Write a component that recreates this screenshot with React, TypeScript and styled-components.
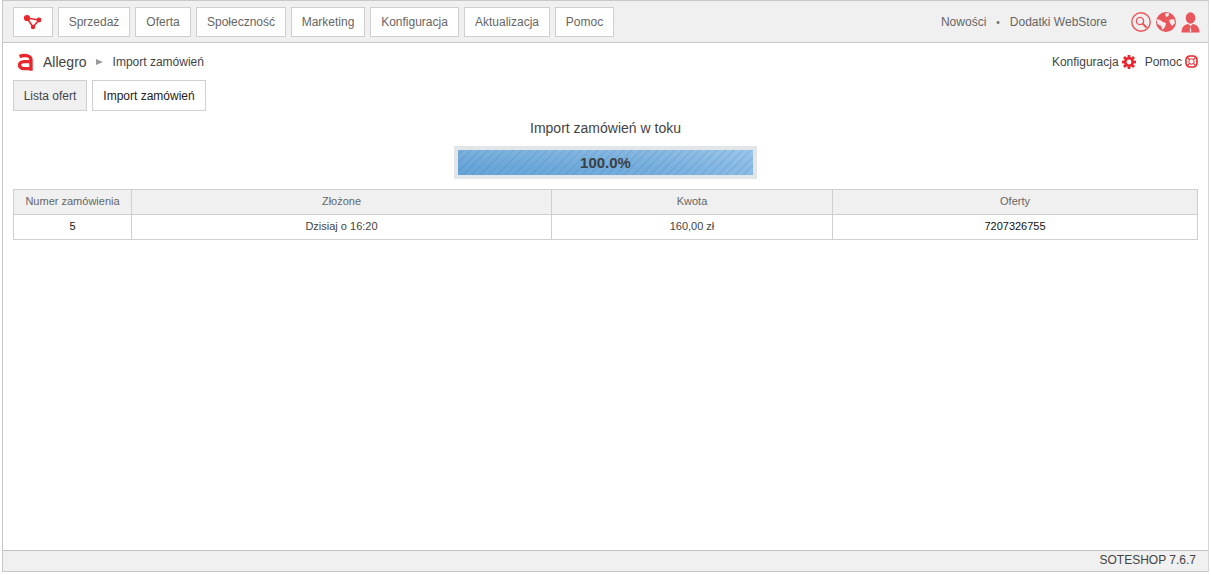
import styled, { createGlobalStyle } from "styled-components";

const GlobalStyle = createGlobalStyle`
  html, body {
    margin: 0;
    padding: 0;
    background: #fff;
  }
  body {
    font-family: "Liberation Sans", Arial, sans-serif;
    font-size: 12px;
    color: #444;
  }
`;

const Frame = styled.div`
  box-sizing: border-box;
  display: flex;
  flex-direction: column;
  width: 1207px;
  height: 572px;
  margin-left: 2px;
  border: 1px solid #c8c8c8;
  border-right-color: #d8d8d8;
`;

const TopBar = styled.header`
  box-sizing: border-box;
  display: flex;
  align-items: center;
  justify-content: space-between;
  height: 42px;
  padding: 1px 8px 0 10px;
  background: #f0f0f0;
  border-bottom: 1px solid #c4c4c4;
`;

const Nav = styled.nav`
  display: flex;
  gap: 5px;
`;

const NavButton = styled.a<{ $w: number }>`
  box-sizing: border-box;
  display: flex;
  align-items: center;
  justify-content: center;
  width: ${(p) => p.$w}px;
  height: 30px;
  background: #fff;
  border: 1px solid #cfcfcf;
  font-size: 12px;
  color: #666;
`;

const TopRight = styled.div`
  display: flex;
  align-items: center;
`;

const TopLink = styled.a`
  font-size: 12px;
  color: #666;
`;

const Dot = styled.span`
  margin: 0 10px;
  font-size: 10px;
  color: #666;
`;

const TopIcons = styled.div`
  display: flex;
  align-items: center;
  gap: 5px;
  margin-left: 24px;
`;

const Crumbs = styled.div`
  display: flex;
  align-items: center;
  justify-content: space-between;
  height: 37px;
  padding: 0 10px 0 15px;
`;

const CrumbLeft = styled.div`
  display: flex;
  align-items: center;
`;

const CrumbTitle = styled.span`
  margin-left: 10px;
  font-size: 14px;
  color: #444;
`;

const CrumbArrow = styled.span`
  width: 0;
  height: 0;
  margin: 0 10px 0 9px;
  border-left: 7px solid #999;
  border-top: 3.5px solid transparent;
  border-bottom: 3.5px solid transparent;
`;

const CrumbCurrent = styled.span`
  font-size: 12px;
  color: #444;
`;

const CrumbRight = styled.div`
  display: flex;
  align-items: center;
  font-size: 12px;
  color: #444;
`;

const HelpLink = styled.a<{ $gap?: number }>`
  display: flex;
  align-items: center;
  gap: 3px;
  margin-left: ${(p) => p.$gap ?? 0}px;
`;

const Tabs = styled.div`
  display: flex;
  gap: 5px;
  padding-left: 10px;
`;

const Tab = styled.a<{ $w: number; $active?: boolean }>`
  box-sizing: border-box;
  display: flex;
  align-items: center;
  justify-content: center;
  width: ${(p) => p.$w}px;
  height: 31px;
  border: 1px solid #cfcfcf;
  font-size: 12px;
  background: ${(p) => (p.$active ? "#fff" : "#f0f0f0")};
  color: ${(p) => (p.$active ? "#222" : "#444")};
`;

const Content = styled.main`
  flex: 1;
  padding: 0 10px;
`;

const ImportTitle = styled.h2`
  margin: 9px 0 0;
  font-size: 14px;
  font-weight: normal;
  line-height: 16px;
  text-align: center;
  color: #444;
`;

const ProgressOuter = styled.div`
  box-sizing: border-box;
  width: 303px;
  height: 33px;
  margin: 10px auto;
  padding: 4px;
  background: #e3e6e8;
`;

const ProgressBar = styled.div`
  display: flex;
  align-items: center;
  justify-content: center;
  height: 100%;
  font-size: 15px;
  font-weight: bold;
  color: #3a3f45;
  background:
    repeating-linear-gradient(
      -45deg,
      rgba(50, 100, 150, 0.1) 0 2px,
      rgba(50, 100, 150, 0) 2px 6px
    ),
    linear-gradient(to bottom, rgba(255, 255, 255, 0.14), rgba(255, 255, 255, 0) 70%),
    linear-gradient(100deg, #66a4d8 0%, #76aedd 65%, #8cbde7 100%);
`;

const Table = styled.table`
  width: 1184px;
  border-collapse: collapse;
  table-layout: fixed;
  font-size: 11px;
`;

const Col = styled.col<{ $w: number }>`
  width: ${(p) => p.$w}px;
`;

const Th = styled.th`
  height: 22px;
  padding: 0 0 2px;
  background: #f0f0f0;
  border: 1px solid #cfcfcf;
  font-weight: normal;
  color: #666;
`;

const Td = styled.td<{ $dark?: boolean }>`
  height: 22px;
  padding: 0 0 2px;
  border: 1px solid #cfcfcf;
  text-align: center;
  color: ${(p) => (p.$dark ? "#111" : "#444")};
`;

const Footer = styled.footer`
  box-sizing: border-box;
  height: 21px;
  padding-right: 12px;
  background: #f0f0f0;
  border-top: 1px solid #c0c0c0;
  font-size: 12px;
  line-height: 19px;
  text-align: right;
  color: #444;
`;

const RED = "#e8262d";
const SOFT = "#e9565c";

const LogoIcon = () => (
  <svg width="20" height="16" viewBox="0 0 20 16">
    <path d="M4 4 L16 6 L10 13 Z" fill="none" stroke={RED} strokeWidth="1.6" />
    <circle cx="4" cy="4" r="3.1" fill={RED} />
    <circle cx="16" cy="6" r="2.4" fill={RED} />
    <circle cx="10" cy="13" r="2.2" fill={RED} />
  </svg>
);

const AllegroIcon = () => (
  <svg width="15" height="18" viewBox="0 -1 15 18">
    <path
      d="M1.6 2.6 C4.5 1.2 13 0.4 13 6 V16.8 M13 7.6 H6 C0 7.6 0 14.6 6 14.6 H13"
      fill="none"
      stroke={RED}
      strokeWidth="3.4"
    />
  </svg>
);

const SearchIcon = () => (
  <svg width="20" height="20" viewBox="0 0 20 20">
    <circle cx="10" cy="10" r="9.2" fill="none" stroke={SOFT} strokeWidth="1.4" />
    <circle cx="9" cy="9" r="3.6" fill="none" stroke={SOFT} strokeWidth="1.4" />
    <path d="M11.8 11.8 L15 15" stroke={SOFT} strokeWidth="2" strokeLinecap="round" />
  </svg>
);

const GlobeIcon = () => (
  <svg width="20" height="20" viewBox="0 0 20 20">
    <circle cx="10" cy="10" r="10" fill={SOFT} />
    <path
      d="M0.5 7 L4 8 L7 10 L10 11 L9 15 L6.5 18 L5 14 L1.5 12 Z M9 1.5 L13 1 L12.5 4 L10 5 Z M13 8 L18 7 L19 11 L16 14 L14.5 12 Z"
      fill="#f7ecec"
    />
  </svg>
);

const UserIcon = () => (
  <svg width="19" height="21" viewBox="0 0 19 21">
    <ellipse cx="9.5" cy="6" rx="4.8" ry="5.8" fill={SOFT} />
    <path d="M0.5 20.5 C0.5 14.5 4 12.6 7 12 L9.5 14 L12 12 C15 12.6 18.5 14.5 18.5 20.5 Z" fill={SOFT} />
    <path d="M9.5 14.5 L10.4 19 L9.5 20.5 L8.6 19 Z" fill="#f7ecec" />
  </svg>
);

const GearIcon = () => (
  <svg width="14" height="14" viewBox="0 0 14 14">
    <circle cx="7" cy="7" r="3.5" fill="none" stroke={RED} strokeWidth="3" />
    <g stroke={RED} strokeWidth="2.8">
      <path d="M7 0 V14" />
      <path d="M0 7 H14" />
      <path d="M2 2 L12 12" />
      <path d="M12 2 L2 12" />
    </g>
    <circle cx="7" cy="7" r="2.4" fill="#fff" />
  </svg>
);

const LifebuoyIcon = () => (
  <svg width="13" height="13" viewBox="0 0 13 13">
    <rect x="1" y="1" width="11" height="11" rx="4" fill="none" stroke={RED} strokeWidth="1.6" />
    <circle cx="6.5" cy="6.5" r="2.7" fill="none" stroke={RED} strokeWidth="1" />
    <path d="M2.5 2.5 L4.6 4.6 M10.5 2.5 L8.4 4.6 M2.5 10.5 L4.6 8.4 M10.5 10.5 L8.4 8.4" stroke={RED} strokeWidth="1.3" />
  </svg>
);

const navItems: [string, number][] = [
  ["Sprzedaż", 72],
  ["Oferta", 56],
  ["Społeczność", 90],
  ["Marketing", 74],
  ["Konfiguracja", 89],
  ["Aktualizacja", 86],
  ["Pomoc", 59],
];

const App = () => (
  <>
    <GlobalStyle />
    <Frame>
      <TopBar>
        <Nav>
          <NavButton $w={40}>
            <LogoIcon />
          </NavButton>
          {navItems.map(([label, w]) => (
            <NavButton key={label} $w={w}>
              {label}
            </NavButton>
          ))}
        </Nav>
        <TopRight>
          <TopLink>Nowości</TopLink>
          <Dot>•</Dot>
          <TopLink>Dodatki WebStore</TopLink>
          <TopIcons>
            <SearchIcon />
            <GlobeIcon />
            <UserIcon />
          </TopIcons>
        </TopRight>
      </TopBar>
      <Crumbs>
        <CrumbLeft>
          <AllegroIcon />
          <CrumbTitle>Allegro</CrumbTitle>
          <CrumbArrow />
          <CrumbCurrent>Import zamówień</CrumbCurrent>
        </CrumbLeft>
        <CrumbRight>
          <HelpLink>
            Konfiguracja <GearIcon />
          </HelpLink>
          <HelpLink $gap={9}>
            Pomoc <LifebuoyIcon />
          </HelpLink>
        </CrumbRight>
      </Crumbs>
      <Tabs>
        <Tab $w={74}>Lista ofert</Tab>
        <Tab $w={114} $active>
          Import zamówień
        </Tab>
      </Tabs>
      <Content>
        <ImportTitle>Import zamówień w toku</ImportTitle>
        <ProgressOuter>
          <ProgressBar>100.0%</ProgressBar>
        </ProgressOuter>
        <Table>
          <colgroup>
            <Col $w={118} />
            <Col $w={420} />
            <Col $w={281} />
            <Col $w={365} />
          </colgroup>
          <thead>
            <tr>
              <Th>Numer zamówienia</Th>
              <Th>Złożone</Th>
              <Th>Kwota</Th>
              <Th>Oferty</Th>
            </tr>
          </thead>
          <tbody>
            <tr>
              <Td $dark>5</Td>
              <Td>Dzisiaj o 16:20</Td>
              <Td>160,00 zł</Td>
              <Td $dark>7207326755</Td>
            </tr>
          </tbody>
        </Table>
      </Content>
      <Footer>SOTESHOP 7.6.7</Footer>
    </Frame>
  </>
);

export default App;
